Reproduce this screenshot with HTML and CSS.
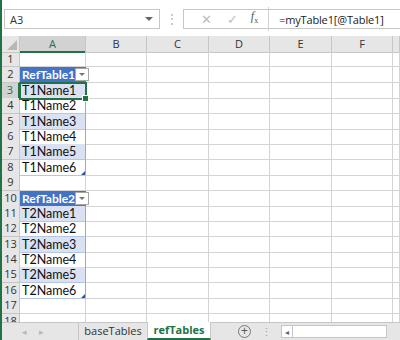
FILE: index.html
```html
<!DOCTYPE html>
<html lang="en">
<head>
    <meta charset="UTF-8">
    <title>refTables</title>
    <link rel="stylesheet" href="styles.css">
</head>
<body>
    <div class="xl-app">
        <div class="xl-bar">
            <div class="xl-namebox">
                <span>A3</span>
                <span class="xl-namebox-arrow"></span>
            </div>
            <div class="xl-dots">⋮</div>
            <div class="xl-formula">
                <span class="xl-btn xl-cancel">✕</span>
                <span class="xl-btn xl-ok">✓</span>
                <span class="xl-fx"><i>f</i><sub>x</sub></span>
                <span class="xl-formula-text">=myTable1[@Table1]</span>
            </div>
        </div>

        <div class="xl-sheet" id="sheet">
            <div class="xl-row xl-head">
                <div class="xl-corner"><span></span></div>
                <div class="xl-col xl-col-on">A</div>
                <div class="xl-col">B</div>
                <div class="xl-col">C</div>
                <div class="xl-col">D</div>
                <div class="xl-col">E</div>
                <div class="xl-col">F</div>
                <div class="xl-col"></div>
            </div>
        </div>

        <div class="xl-tabs">
            <div class="xl-nav">
                <span>◂</span>
                <span>▸</span>
            </div>
            <div class="xl-tab">baseTables</div>
            <div class="xl-tab xl-tab-on">refTables</div>
            <div class="xl-add">+</div>
            <div class="xl-tab-dots">⋮</div>
            <div class="xl-scroll">
                <span class="xl-scroll-left">◂</span>
            </div>
        </div>
    </div>

    <script>
        // contenu de la colonne A, ligne par ligne
        var cells = {
            2: 'RefTable1', 3: 'T1Name1', 4: 'T1Name2', 5: 'T1Name3', 6: 'T1Name4', 7: 'T1Name5', 8: 'T1Name6',
            10: 'RefTable2', 11: 'T2Name1', 12: 'T2Name2', 13: 'T2Name3', 14: 'T2Name4', 15: 'T2Name5', 16: 'T2Name6'
        };
        var heads = [2, 10];
        var ends = [8, 16];
        var sheet = document.getElementById('sheet');

        for (var r = 1; r <= 18; r++) {
            var row = document.createElement('div');
            row.className = 'xl-row';

            var num = document.createElement('div');
            num.className = 'xl-num' + (r === 3 ? ' xl-num-on' : '');
            num.textContent = r;
            row.appendChild(num);

            for (var c = 0; c < 7; c++) {
                var cell = document.createElement('div');
                cell.className = 'xl-cell';
                if (c === 0 && cells[r]) {
                    if (heads.indexOf(r) >= 0) {
                        cell.className += ' xl-thead';
                        cell.innerHTML = '<span>' + cells[r] + '</span><span class="xl-filter"></span>';
                    } else {
                        var first = r < 10 ? heads[0] : heads[1];
                        cell.className += ' xl-tcell' + ((r - first) % 2 === 1 ? ' xl-band' : '');
                        if (ends.indexOf(r) >= 0) cell.className += ' xl-tend';
                        cell.textContent = cells[r];
                    }
                    if (r === 3) cell.className += ' xl-active';
                }
                row.appendChild(cell);
            }
            sheet.appendChild(row);
        }
    </script>
</body>
</html>
```

FILE: styles.css
```css
:root {
    --xl-green: #217346;
    --xl-grid: #d4d4d4;
    --xl-head: #e6e6e6;
    --xl-head-line: #c6c6c6;
    --xl-blue: #4472c4;
    --xl-band: #d9e1f2;
    --xl-row-h: 15.4px;
}

* {
    margin: 0;
    padding: 0;
    box-sizing: border-box;
}

body {
    width: 400px;
    height: 340px;
    overflow: hidden;
    background: #ffffff;
    font-family: 'Open Sans', 'Liberation Sans', sans-serif;
    color: #222222;
}

.xl-app {
    height: 340px;
    display: flex;
    flex-direction: column;
    border-left: 2px solid var(--xl-green);
}

/* barre de formule */
.xl-bar {
    height: 36px;
    display: flex;
    align-items: flex-start;
    padding: 9px 0 0 2px;
    background: #ffffff;
}

.xl-namebox {
    width: 156px;
    height: 20px;
    border: 1px solid #c6c6c6;
    display: flex;
    align-items: center;
    justify-content: space-between;
    padding: 0 5px 0 5px;
    font-size: 11px;
    color: #333333;
}

.xl-namebox-arrow {
    width: 0;
    height: 0;
    border-left: 4px solid transparent;
    border-right: 4px solid transparent;
    border-top: 4px solid #666666;
    margin-right: 1px;
}

.xl-dots {
    width: 23px;
    text-align: center;
    color: #b0b0b0;
    font-size: 12px;
    line-height: 20px;
}

.xl-formula {
    flex: 1;
    height: 20px;
    border: 1px solid #c6c6c6;
    border-right: none;
    display: flex;
    align-items: center;
    padding-left: 9px;
}

.xl-btn {
    width: 26px;
    text-align: center;
    color: #bdbdbd;
    font-size: 13px;
    line-height: 18px;
}

.xl-fx {
    width: 24px;
    text-align: center;
    color: #555555;
    font-family: 'Liberation Serif', serif;
    font-size: 12px;
    padding-right: 4px;
    border-right: 1px solid #d0d0d0;
    line-height: 18px;
}

.xl-fx sub {
    font-size: 8px;
}

.xl-formula-text {
    padding-left: 10px;
    font-size: 11px;
    letter-spacing: -0.15px;
    color: #222222;
}

/* feuille */
.xl-sheet {
    flex: 1;
    overflow: hidden;
    display: flex;
    flex-direction: column;
}

.xl-row {
    display: grid;
    grid-template-columns: 18px 66px 61px 62px 61px 62px 61px 1fr;
    height: var(--xl-row-h);
    flex-shrink: 0;
}

.xl-head {
    height: 16px;
}

.xl-corner,
.xl-col {
    background: var(--xl-head);
    border-right: 1px solid var(--xl-head-line);
    border-bottom: 1px solid var(--xl-head-line);
    font-size: 11px;
    line-height: 15px;
    text-align: center;
    color: #333333;
}

.xl-corner {
    position: relative;
}

.xl-corner span {
    position: absolute;
    right: 2px;
    bottom: 2px;
    width: 0;
    height: 0;
    border-left: 10px solid transparent;
    border-bottom: 10px solid #b8b8b8;
}

.xl-col-on {
    background: #d2d2d2;
    color: var(--xl-green);
    border-bottom: 2px solid var(--xl-green);
}

.xl-num {
    background: var(--xl-head);
    border-right: 1px solid var(--xl-head-line);
    border-bottom: 1px solid var(--xl-head-line);
    font-size: 11px;
    text-align: center;
    line-height: 14px;
    color: #333333;
}

.xl-num-on {
    background: #d2d2d2;
    color: var(--xl-green);
    border-right: 2px solid var(--xl-green);
}

.xl-cell {
    border-right: 1px solid var(--xl-grid);
    border-bottom: 1px solid var(--xl-grid);
    font-family: Lato, 'Liberation Sans', sans-serif;
    font-size: 12.5px;
    line-height: 15px;
    padding-left: 2px;
    color: #111111;
    position: relative;
    white-space: nowrap;
}

.xl-thead {
    background: var(--xl-blue);
    color: #ffffff;
    font-weight: bold;
    font-size: 12px;
    display: flex;
    justify-content: space-between;
    align-items: center;
    border-right: 1px solid var(--xl-blue);
    border-bottom: 1px solid #8ea9db;
    padding-right: 1px;
}

.xl-filter {
    width: 14px;
    height: 13px;
    flex-shrink: 0;
    background: #ffffff;
    border: 1px solid #a6a6a6;
    position: relative;
}

.xl-filter::after {
    content: '';
    position: absolute;
    left: 3px;
    top: 4px;
    border-left: 3px solid transparent;
    border-right: 3px solid transparent;
    border-top: 3px solid #777777;
}

.xl-tcell {
    border-right: 1px solid #8ea9db;
    border-bottom: 1px solid #b4c6e7;
}

.xl-band {
    background: var(--xl-band);
}

.xl-tend::after {
    content: '';
    position: absolute;
    right: 0;
    bottom: 0;
    border-left: 4px solid transparent;
    border-bottom: 4px solid #2f5597;
}

.xl-active {
    outline: 2px solid var(--xl-green);
    outline-offset: -1px;
    z-index: 1;
}

.xl-active::after {
    content: '';
    position: absolute;
    right: -4px;
    bottom: -4px;
    width: 5px;
    height: 5px;
    background: var(--xl-green);
    border: 1px solid #ffffff;
}

/* onglets */
.xl-tabs {
    height: 18px;
    display: flex;
    align-items: stretch;
    background: #e6e6e6;
    border-top: 1px solid #c6c6c6;
    font-size: 11px;
}

.xl-nav {
    width: 76px;
    display: flex;
    gap: 12px;
    padding-left: 20px;
    color: #b8b8b8;
    font-size: 9px;
    line-height: 17px;
}

.xl-tab {
    width: 69px;
    text-align: center;
    border-left: 1px solid #c6c6c6;
    line-height: 16px;
    color: #333333;
}

.xl-tab-on {
    width: 64px;
    background: #ffffff;
    color: var(--xl-green);
    font-weight: bold;
    border-bottom: 2px solid var(--xl-green);
    border-right: 1px solid #c6c6c6;
    margin-top: -1px;
}

.xl-add {
    width: 13px;
    height: 13px;
    margin: 2px 0 0 27px;
    border: 1px solid #777777;
    border-radius: 50%;
    font-size: 12px;
    line-height: 10px;
    text-align: center;
    color: #555555;
}

.xl-tab-dots {
    width: 30px;
    text-align: center;
    color: #a0a0a0;
    line-height: 17px;
}

.xl-scroll {
    width: 106px;
    margin: 2px 0 2px 0;
    background: #ffffff;
    border: 1px solid #c6c6c6;
    display: flex;
}

.xl-scroll-left {
    width: 11px;
    border-right: 1px solid #c6c6c6;
    font-size: 8px;
    line-height: 11px;
    text-align: center;
    color: #666666;
}
```
